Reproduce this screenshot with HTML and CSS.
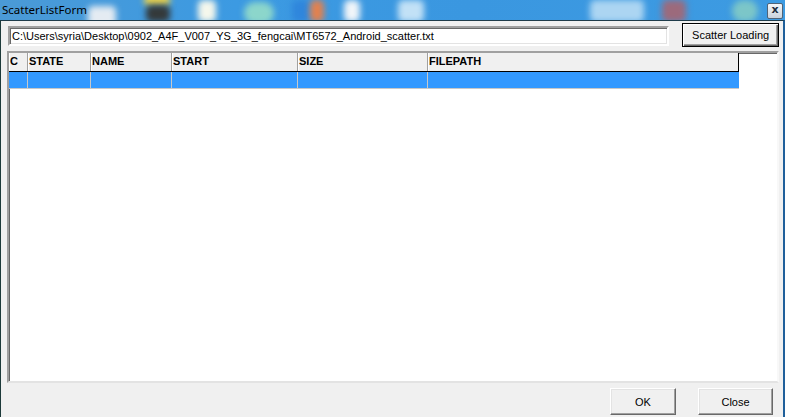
FILE: index.html
```html
<!DOCTYPE html>
<html lang="en">
<head>
  <meta charset="UTF-8">
  <title>ScatterListForm</title>
  <link rel="stylesheet" href="styles.css">
</head>
<body>
  <div class="window">
    <!-- Title bar (glass, desktop showing through) -->
    <div class="titlebar">
      <span class="blob b1"></span>
      <span class="blob b2"></span>
      <span class="blob b3"></span>
      <span class="blob b4"></span>
      <span class="blob b5"></span>
      <span class="blob b6"></span>
      <span class="blob b7"></span>
      <span class="blob b8"></span>
      <span class="blob b9"></span>
      <span class="blob b10"></span>
      <span class="blob b11"></span>
      <span class="blob b12"></span>
      <span class="title">ScatterListForm</span>
      <span class="close-box">x</span>
    </div>

    <div class="body">
      <div class="toolbar">
        <div class="path-box">C:\Users\syria\Desktop\0902_A4F_V007_YS_3G_fengcai\MT6572_Android_scatter.txt</div>
        <button class="btn btn-default">Scatter Loading</button>
      </div>

      <div class="list">
        <div class="list-head">
          <div class="col c-c">C</div>
          <div class="col c-state">STATE</div>
          <div class="col c-name">NAME</div>
          <div class="col c-start">START</div>
          <div class="col c-size">SIZE</div>
          <div class="col c-path">FILEPATH</div>
        </div>
        <div class="list-row selected">
          <div class="cell c-c"></div>
          <div class="cell c-state"></div>
          <div class="cell c-name"></div>
          <div class="cell c-start"></div>
          <div class="cell c-size"></div>
          <div class="cell c-path"></div>
        </div>
      </div>

      <div class="footer">
        <button class="btn btn-ok">OK</button>
        <button class="btn btn-close">Close</button>
      </div>
    </div>
  </div>
</body>
</html>
```

FILE: styles.css
```css
/* General */
body {
  margin: 0;
  padding: 0;
  font-family: "Liberation Sans", Arial, sans-serif;
  font-size: 11px;
  background: #f0f0f0;
}

.window {
  width: 785px;
  height: 417px;
  display: flex;
  flex-direction: column;
  overflow: hidden;
}

/* Title bar */
.titlebar {
  position: relative;
  height: 20px;
  flex: none;
  overflow: hidden;
  background: linear-gradient(90deg, #4b9ad6 0%, #3c9ae2 30%, #3a97e0 60%, #3d9be2 100%);
  display: flex;
  align-items: center;
}

.title {
  position: relative;
  margin-left: 2px;
  font-family: "Noto Sans", "Open Sans", sans-serif;
  font-size: 11.5px;
  color: #000;
  flex: 1;
  line-height: 18px;
}

.close-box {
  position: relative;
  width: 14px;
  height: 14px;
  margin-right: 2px;
  margin-top: 2px;
  border: 1px solid #4f6377;
  border-radius: 2px;
  background: linear-gradient(#f4f6f8, #c9d2dc);
  color: #1e2e40;
  font-family: "DejaVu Sans", sans-serif;
  font-weight: bold;
  font-size: 11px;
  line-height: 12px;
  text-align: center;
}

.blob {
  position: absolute;
  top: 0;
  height: 22px;
  border-radius: 5px;
  filter: blur(3px);
}
.b1 { left: 88px; width: 28px; background: #e4ebf2; top: 6px; }
.b2 { left: 144px; width: 26px; background: #e8d24e; top: -6px; height: 12px; }
.b3 { left: 146px; width: 24px; background: #34393a; top: 5px; height: 17px; }
.b4 { left: 198px; width: 18px; background: #f5f7ec; }
.b5 { left: 244px; width: 30px; background: #8cd6cb; border-radius: 15px; top: 2px; }
.b6 { left: 292px; width: 18px; background: #2f86dc; }
.b7 { left: 310px; width: 14px; background: #e2814e; }
.b8 { left: 344px; width: 16px; background: #f1f5f9; }
.b9 { left: 398px; width: 26px; background: #c2e1f6; }
.b10 { left: 590px; width: 54px; background: #acd5f2; }
.b11 { left: 662px; width: 24px; background: #9c6a7c; }
.b12 { left: 732px; width: 26px; background: #7cc6c8; border-radius: 13px; }

/* Body */
.body {
  flex: 1;
  display: flex;
  flex-direction: column;
  border-top: 1px solid #1f3c4a;
  border-left: 1px solid #1d3a3a;
  border-right: 2px solid #1f5f9a;
  padding: 2px 4px 0 6px;
}

.toolbar {
  display: flex;
  align-items: center;
  height: 24px;
  gap: 13px;
}

.path-box {
  width: 655px;
  height: 16px;
  margin-top: 2px;
  margin-left: 1px;
  padding: 0 2px;
  background: #fff;
  border-top: 2px solid #a0a0a0;
  border-left: 2px solid #a0a0a0;
  border-right: 2px solid #fff;
  border-bottom: 2px solid #fff;
  box-shadow: inset 1px 1px 0 #696969, inset -1px -1px 0 #e3e3e3;
  line-height: 16px;
  white-space: nowrap;
  overflow: hidden;
}

.btn {
  font-family: "Liberation Sans", Arial, sans-serif;
  font-size: 11px;
  background: #f0f0f0;
  color: #000;
  padding: 0;
  border-top: 1px solid #fff;
  border-left: 1px solid #fff;
  border-right: 1px solid #696969;
  border-bottom: 1px solid #696969;
  box-shadow: inset -1px -1px 0 #a0a0a0, inset 1px 1px 0 #e3e3e3;
}

.btn-default {
  width: 97px;
  height: 24px;
  border: 1px solid #000;
  box-shadow: inset 1px 1px 0 #fff, inset -1px -1px 0 #696969, inset -2px -2px 0 #a0a0a0;
}

/* List view */
.list {
  margin-top: 4px;
  width: 768px;
  height: 328px;
  background: #fff;
  border-top: 2px solid #a0a0a0;
  border-left: 2px solid #a0a0a0;
  border-right: 2px solid #f8f8f8;
  border-bottom: 2px solid #e3e3e3;
  box-shadow: inset 1px 1px 0 #696969;
}

.list-head,
.list-row {
  display: flex;
  width: 730px;
}

.list-head {
  height: 18px;
  background: #f0f0f0;
  border-bottom: 1px solid #000;
}

.col {
  font-weight: bold;
  line-height: 17px;
  padding-left: 1px;
  box-sizing: border-box;
  border-right: 1px solid #a0a0a0;
  box-shadow: inset 1px 0 0 #fff;
}

.col:last-child {
  border-right: 1px solid #000;
}

.list-row {
  height: 16px;
  border-bottom: 1px solid #c8c8c8;
}

.selected {
  background: #3399ff;
}

.cell {
  box-sizing: border-box;
  border-right: 1px solid #c8c8c8;
}

.cell:last-child {
  border-right: none;
}

.c-c { width: 19px; }
.c-state { width: 63px; }
.c-name { width: 81px; }
.c-start { width: 126px; }
.c-size { width: 130px; }
.c-path { width: 311px; }

/* Footer */
.footer {
  display: flex;
  justify-content: flex-end;
  gap: 22px;
  padding-top: 5px;
  padding-right: 6px;
}

.btn-ok {
  width: 66px;
  height: 27px;
}

.btn-close {
  width: 75px;
  height: 27px;
}
```
